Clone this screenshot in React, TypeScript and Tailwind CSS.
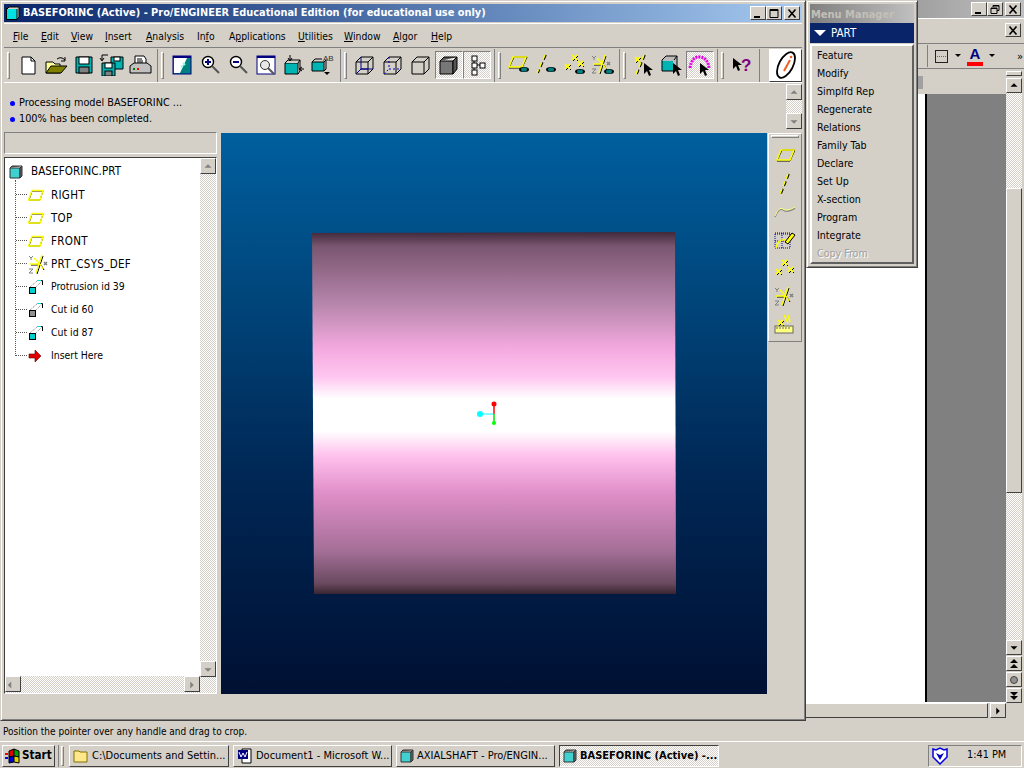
import React from "react";

// bevels used all over the place
const raised = "border border-t-white border-l-white border-r-[#404040] border-b-[#404040] bg-[#d4d0c8]";
const thin = "border border-t-white border-l-white border-r-[#808080] border-b-[#808080]";
const sunken = "border border-t-[#808080] border-l-[#808080] border-r-white border-b-white";
const dither = "bg-[repeating-conic-gradient(#ffffff_0%_25%,#d4d0c8_0%_50%)] bg-[length:2px_2px]";

function Svg({ w = 22, h = 22, children }: { w?: number; h?: number; children: React.ReactNode }) {
  return (
    <svg width={w} height={h} viewBox={`0 0 ${w} ${h}`} className="block shrink-0">
      {children}
    </svg>
  );
}

const Eye = ({ x = 0, y = 0 }: { x?: number; y?: number }) => (
  <g transform={`translate(${x} ${y})`}>
    <ellipse cx="5" cy="2.5" rx="5" ry="2.5" fill="#000" />
    <ellipse cx="5" cy="2.5" rx="3" ry="2" fill="#008080" />
  </g>
);
const Arrow = ({ x = 0, y = 0 }: { x?: number; y?: number }) => (
  <path transform={`translate(${x} ${y})`} d="M0 0V11L3 8L5 13L7 12L5 7H9Z" fill="#000" />
);
const Cross = ({ x, y }: { x: number; y: number }) => (
  <g transform={`translate(${x} ${y})`}>
    <path d="M1 1L6 6M6 1L1 6" stroke="#000" strokeWidth="1" />
    <path d="M0 0L5 5M5 0L0 5" stroke="#ffff00" strokeWidth="1.6" />
  </g>
);
const Plane = ({ dx = 0, dy = 0 }: { dx?: number; dy?: number }) => (
  <g transform={`translate(${dx} ${dy})`} fill="none">
    <path d="M1 13L6 2H19L14 13Z" stroke="#000" />
    <path d="M1 12L5 2H18L14 12Z" stroke="#ffff00" strokeWidth="1.5" />
  </g>
);
const Csys = ({ dx = 0, dy = 0 }: { dx?: number; dy?: number }) => (
  <g transform={`translate(${dx} ${dy})`}>
    <path d="M1 2L3 4L5 2M3 4V6M1 15H5L1 19H5" stroke="#808080" fill="none" />
    <path d="M16 8L19 11M19 8L16 11" stroke="#808080" strokeWidth="1.5" />
    <path d="M15 2L9 20M3 11H13M13 11L16 16" stroke="#000" strokeWidth="1" fill="none" />
    <path d="M14 1L8 19M2 10H12M12 10L15 15M12 10L6 4" stroke="#ffff00" strokeWidth="1.4" fill="none" />
  </g>
);

const icons: Record<string, React.ReactNode> = {
  new: <Svg><path d="M5 3H14L18 7V20H5Z" fill="#fff" stroke="#000" /><path d="M14 3V7H18" fill="none" stroke="#000" /></Svg>,
  open: (
    <Svg w={26}>
      <path d="M3 19V8H10L12 10H17V19Z" fill="#ffff99" stroke="#000" />
      <path d="M3 19L8 12H24L18 19Z" fill="#808000" stroke="#000" />
      <path d="M14 5Q18 2 22 6M22 3V7H18" fill="none" stroke="#000" />
    </Svg>
  ),
  save: (
    <Svg><path d="M3 3H19V19H3Z" fill="#00b4b4" stroke="#000" /><rect x="6" y="3" width="10" height="7" fill="#fff" stroke="#000" /><rect x="6" y="13" width="10" height="6" fill="#808080" stroke="#000" /></Svg>
  ),
  saveAll: (
    <Svg w={26}>
      <path d="M12 3H24V15H12Z" fill="#00b4b4" stroke="#000" /><rect x="15" y="3" width="6" height="4" fill="#fff" stroke="#000" />
      <path d="M3 9H16V22H3Z" fill="#00b4b4" stroke="#000" /><rect x="6" y="9" width="7" height="5" fill="#fff" stroke="#000" /><rect x="6" y="17" width="7" height="5" fill="#808080" stroke="#000" />
      <path d="M9 1H3M3 1V6M1 4L3 7L5 4" fill="none" stroke="#000" />
    </Svg>
  ),
  print: (
    <Svg w={24}>
      <path d="M7 2H16L18 5V11H7Z" fill="#fff" stroke="#000" /><path d="M9 5H14M9 7H15M9 9H15" stroke="#000" />
      <path d="M2 12L6 9H19L23 12V19H2Z" fill="#c0c0c0" stroke="#000" />
      <rect x="5" y="14" width="2" height="2" fill="#008000" /><rect x="9" y="14" width="2" height="2" fill="#ff0000" />
    </Svg>
  ),
  repaint: (
    <Svg w={20} h={20}>
      <rect x="1" y="1" width="18" height="18" fill="#008080" stroke="#000080" />
      <rect x="1" y="1" width="18" height="2" fill="#000080" />
      <path d="M2 3H15L8 18H2Z" fill="#fff" />
      <path d="M11 8L13 10M9 11L11 12" stroke="#8fd" strokeWidth="2" />
    </Svg>
  ),
  zoomIn: (
    <Svg><circle cx="9" cy="8" r="5.5" fill="#fff" stroke="#000" strokeWidth="1.4" /><path d="M6 8H12M9 5V11" stroke="#000080" strokeWidth="2" /><path d="M13 12L20 19" stroke="#555" strokeWidth="2" /></Svg>
  ),
  zoomOut: (
    <Svg><circle cx="9" cy="8" r="5.5" fill="#fff" stroke="#000" strokeWidth="1.4" /><path d="M6 8H12" stroke="#000080" strokeWidth="2" /><path d="M13 12L20 19" stroke="#555" strokeWidth="2" /></Svg>
  ),
  refit: (
    <Svg w={20} h={20}>
      <rect x="1" y="1" width="18" height="18" fill="#fff" stroke="#000080" /><rect x="1" y="1" width="18" height="2" fill="#000080" />
      <circle cx="9" cy="10" r="4.5" fill="#e8e8e8" stroke="#333" /><path d="M12 13L18 19" stroke="#555" strokeWidth="2" />
    </Svg>
  ),
  orient: (
    <Svg>
      <path d="M2 9H15V20H2Z" fill="#00b4b4" stroke="#000" /><path d="M2 9L5 6H17L15 9M17 6V17L15 20" fill="#d4d0c8" stroke="#000" />
      <path d="M7 1V6M5 4L7 7L9 4M21 15H17M19 13L16 15L19 17" fill="none" stroke="#000" />
    </Svg>
  ),
  views: (
    <Svg w={24}>
      <path d="M2 8H14V17H2Z" fill="#00b4b4" stroke="#000" /><path d="M2 8L5 5H12M14 8L16 6V15L14 17" fill="none" stroke="#000" />
      <path d="M11 17H17L14 20Z" fill="#000" transform="translate(3 1)" />
      <text x="13" y="7" fontSize="8" fill="#333" fontFamily="Liberation Sans, sans-serif">AB</text>
    </Svg>
  ),
  boxFull: <Svg><path d="M2 8H14V20H2Z M2 8L7 3H19V15L14 20M14 8L19 3" fill="none" stroke="#000" /><path d="M7 3V15H19M2 20L7 15" stroke="#000080" fill="none" /><path d="M7 15H14" stroke="#000080" /></Svg>,
  boxDash: <Svg><path d="M2 8H14V20H2Z M2 8L7 3H19V15L14 20M14 8L19 3" fill="none" stroke="#000" /><path d="M7 3V15H19M2 20L7 15" stroke="#0000c0" strokeDasharray="2 2" fill="none" /></Svg>,
  boxPlain: <Svg><path d="M2 8H14V20H2Z M2 8L7 3H19V15L14 20M14 8L19 3" fill="none" stroke="#000" /></Svg>,
  boxShade: (
    <Svg><path d="M2 7H15V20H2Z" fill="#777" stroke="#000" /><path d="M2 7L6 3H19V15L15 20V7L19 3" fill="#555" stroke="#000" /></Svg>
  ),
  tree: (
    <Svg w={20} h={22}>
      <rect x="5" y="2" width="5" height="5" fill="#fff" stroke="#000" /><rect x="5" y="9" width="5" height="5" fill="#fff" stroke="#000" /><rect x="5" y="16" width="5" height="5" fill="#fff" stroke="#000" /><rect x="13" y="9" width="5" height="5" fill="#fff" stroke="#000" />
      <path d="M7 7V9M7 14V16M10 11H13" stroke="#000" />
    </Svg>
  ),
  planeEye: <Svg w={24}><Plane dx={1} dy={1} /><Eye x={12} y={13} /></Svg>,
  axisEye: <Svg w={24}><path d="M11 1L3 19" stroke="#000" strokeWidth="1.6" strokeDasharray="5 3" /><path d="M10 1L2 19" stroke="#ffff00" strokeWidth="1.4" strokeDasharray="5 3" /><Eye x={11} y={13} /></Svg>,
  pointEye: <Svg w={24}><Cross x={9} y={1} /><Cross x={2} y={10} /><Cross x={15} y={7} /><Eye x={12} y={15} /></Svg>,
  csysEye: <Svg w={24}><Csys /><Eye x={13} y={15} /></Svg>,
  selAxis: <Svg w={24}><Cross x={3} y={3} /><path d="M13 1L5 20" stroke="#000" strokeWidth="1.6" strokeDasharray="5 3" /><path d="M12 1L4 20" stroke="#ffff00" strokeWidth="1.4" strokeDasharray="5 3" /><Arrow x={12} y={9} /></Svg>,
  selSolid: <Svg w={24}><path d="M2 6H14V17H2Z" fill="#00b4b4" stroke="#000" /><path d="M2 6L6 2H17V13L14 17M14 6L17 2" fill="#bbb" stroke="#000" /><rect x="3" y="7" width="10" height="9" fill="#00b4b4" /><Arrow x={13} y={9} /></Svg>,
  selSurf: <Svg w={24}><path d="M2 14Q4 2 12 3Q20 4 21 14" fill="none" stroke="#e000e0" strokeWidth="3" strokeDasharray="2 1" /><Arrow x={12} y={9} /></Svg>,
  help: (
    <Svg w={24}>
      <Arrow x={3} y={4} />
      <text x="11" y="17" fontSize="17" fontWeight="700" fill="#800080" fontFamily="Liberation Sans, sans-serif">?</text>
    </Svg>
  ),
};

function ToolBtn({ icon, on }: { icon: string; on?: boolean }) {
  return (
    <div className={`flex h-[28px] w-[28px] items-center justify-center ${on ? `${sunken} ${dither}` : ""}`}>
      {icons[icon]}
    </div>
  );
}

function Group({ items, on = [], w }: { items: string[]; on?: string[]; w: string }) {
  return (
    <div className={`flex h-[33px] items-center border-r border-r-[#808080] pl-[3px] ${w}`}>
      <div className={`mr-[4px] h-[27px] w-[3px] ${thin}`} />
      {items.map((i) => (
        <ToolBtn key={i} icon={i} on={on.includes(i)} />
      ))}
    </div>
  );
}

function WinBtn({ kind }: { kind: "min" | "max" | "close" | "restore" }) {
  return (
    <div className={`flex h-[14px] w-[16px] items-center justify-center ${raised}`}>
      <svg width="10" height="9" viewBox="0 0 10 9">
        {kind === "min" && <rect x="1" y="7" width="6" height="2" fill="#000" />}
        {kind === "max" && <path d="M1 0.5H9V8.5H1ZM1 1.5H9" fill="none" stroke="#000" />}
        {kind === "close" && <path d="M1.5 0.5L8.5 8.5M8.5 0.5L1.5 8.5" stroke="#000" strokeWidth="1.6" />}
        {kind === "restore" && <path d="M3 2V0.5H9V5.5H7M1 3H7V8.5H1ZM1 3.5H7M3 1H9" fill="none" stroke="#000" />}
      </svg>
    </div>
  );
}

function ScrollBtn({ dir, color = "#808080", className = "" }: { dir: "up" | "down" | "left" | "right"; color?: string; className?: string }) {
  const d = { up: "M4 6L8 2L12 6Z", down: "M4 3H12L8 7Z", left: "M6 1V9L2 5Z", right: "M6 1V9L10 5Z" }[dir];
  return (
    <div className={`flex h-[16px] w-[16px] shrink-0 items-center justify-center ${raised} ${className}`}>
      <svg width="16" height="9" viewBox="0 0 16 9" className="block">
        <path d={d} fill={color} />
      </svg>
    </div>
  );
}

function BrowseBtn({ kind }: { kind: "prev" | "dot" | "next" }) {
  return (
    <div className={`flex h-[15px] w-[16px] items-center justify-center ${raised}`}>
      <svg width="10" height="10" viewBox="0 0 10 10" className="block">
        {kind === "prev" && <path d="M5 0L9 4H1ZM5 5L9 9H1Z" fill="#000" />}
        {kind === "dot" && <circle cx="5" cy="5" r="3.5" fill="#909090" stroke="#444" />}
        {kind === "next" && <path d="M1 1H9L5 5ZM1 5H9L5 9Z" fill="#000" />}
      </svg>
    </div>
  );
}

const Under = ({ t, u }: { t: string; u: number }) => (
  <span>
    {t.slice(0, u)}
    <span className="underline">{t[u]}</span>
    {t.slice(u + 1)}
  </span>
);

const menus: [string, number, string][] = [
  ["File", 0, "w-[28px]"],
  ["Edit", 0, "w-[30px]"],
  ["View", 0, "w-[34px]"],
  ["Insert", 0, "w-[41px]"],
  ["Analysis", 0, "w-[51px]"],
  ["Info", 2, "w-[32px]"],
  ["Applications", 1, "w-[69px]"],
  ["Utilities", 0, "w-[46px]"],
  ["Window", 0, "w-[49px]"],
  ["Algor", 0, "w-[38px]"],
  ["Help", 0, "w-[30px]"],
];

const Extrude = ({ fill }: { fill: string }) => (
  <Svg w={16} h={16}>
    <path d="M7 9L14 2M2 8L9 2" stroke="#808080" strokeDasharray="1 1" />
    <path d="M10 1.5H14.5V6" stroke="#000" fill="none" />
    <path d="M9 1.5H13" stroke="#00e0e0" />
    <rect x="1.5" y="8.5" width="6" height="6" fill={fill} stroke="#000" />
  </Svg>
);

const treeIcons: Record<string, React.ReactNode> = {
  plane: <Svg w={16} h={14}><path d="M1 12L4 3H15L12 12Z" fill="none" stroke="#000" /><path d="M0.5 12L4 2.5H15L12 12Z" fill="none" stroke="#ffff00" strokeWidth="1.4" /></Svg>,
  csys: <Svg w={20} h={20}><Csys /></Svg>,
  cut: <Extrude fill="#00d0d0" />,
  cutGray: <Extrude fill="#909090" />,
  insert: <Svg w={16} h={14}><path d="M1 5H7V1L13 7L7 13V9H1Z" fill="#e00000" stroke="#600000" strokeWidth="0.6" /></Svg>,
};

const treeRows: [string, string][] = [
  ["RIGHT", "plane"],
  ["TOP", "plane"],
  ["FRONT", "plane"],
  ["PRT_CSYS_DEF", "csys"],
  ["Protrusion id 39", "cut"],
  ["Cut id 60", "cutGray"],
  ["Cut id 87", "cut"],
  ["Insert Here", "insert"],
];

function ModelTree() {
  return (
    <div className="flex h-[537px] border border-t-[#404040] border-l-[#404040] border-r-white border-b-white bg-white">
      <div className="flex min-w-0 flex-1 flex-col">
        <div className="relative flex-1 overflow-hidden bg-white">
          <div className="flex h-[25px] items-center pl-[4px] pt-[2px]">
            <svg width="14" height="14" viewBox="0 0 14 14" className="mr-[8px] block">
              <path d="M1 3H11V13H1Z" fill="#40d0d0" stroke="#333" />
              <path d="M1 3L3 1H13V11L11 13V3L13 1" fill="#606060" stroke="#333" />
            </svg>
            <span className="pt-[1px] text-[11.5px] tracking-[0.1px]">BASEFORINC.PRT</span>
          </div>
          <div className="absolute left-[10px] top-[22px] h-[176px] border-l border-dotted border-l-[#555]" />
          {treeRows.map(([t, ic]) => (
            <div key={t} className="flex h-[23px] items-center pl-[11px]">
              <div className="w-[11px] shrink-0 border-t border-dotted border-t-[#555]" />
              <div className="flex w-[24px] shrink-0 items-center pl-[1px]">{treeIcons[ic]}</div>
              <span className={t === t.toUpperCase() ? "pt-[2px] text-[11.5px] tracking-[0.3px]" : "text-[10.4px]"}>{t}</span>
            </div>
          ))}
        </div>
        <div className={`flex h-[17px] ${dither}`}>
          <ScrollBtn dir="left" />
          <div className="flex-1" />
          <ScrollBtn dir="right" />
        </div>
      </div>
      <div className={`flex w-[16px] flex-col justify-between pb-[16px] ${dither}`}>
        <ScrollBtn dir="up" />
        <ScrollBtn dir="down" />
      </div>
    </div>
  );
}

function Viewport() {
  return (
    <svg width="546" height="561" viewBox="0 0 546 561" className="block shrink-0">
      <defs>
        <linearGradient id="bg" x1="0" y1="0" x2="0" y2="1">
          <stop offset="0" stopColor="#005f9e" />
          <stop offset="0.3" stopColor="#00457a" />
          <stop offset="0.6" stopColor="#002856" />
          <stop offset="1" stopColor="#001033" />
        </linearGradient>
        <linearGradient id="shaft" x1="0" y1="0" x2="0" y2="1">
          <stop offset="0" stopColor="#40293a" />
          <stop offset="0.04" stopColor="#7a5670" />
          <stop offset="0.2" stopColor="#b786ac" />
          <stop offset="0.32" stopColor="#f3a9de" />
          <stop offset="0.4" stopColor="#ffc6f0" />
          <stop offset="0.46" stopColor="#ffffff" />
          <stop offset="0.55" stopColor="#ffffff" />
          <stop offset="0.62" stopColor="#ffc0ec" />
          <stop offset="0.72" stopColor="#e08fc8" />
          <stop offset="0.88" stopColor="#a56f98" />
          <stop offset="0.97" stopColor="#6a4a60" />
          <stop offset="1" stopColor="#3a2530" />
        </linearGradient>
      </defs>
      <rect width="546" height="561" fill="url(#bg)" />
      <path d="M91 100L454 99L455 461L93 461Z" fill="url(#shaft)" />
      <path d="M273 271V281" stroke="#ff0000" strokeWidth="1.5" />
      <path d="M259 281H273" stroke="#00ffff" strokeWidth="1" />
      <path d="M273 281V290" stroke="#00e000" strokeWidth="1.5" />
      <circle cx="273" cy="271" r="2.5" fill="#ff0000" />
      <circle cx="259" cy="281" r="3" fill="#00ffff" />
      <circle cx="273" cy="290" r="2" fill="#00ff00" />
    </svg>
  );
}

const paletteIcons: React.ReactNode[] = [
  <Svg w={20} h={16}><Plane dx={1} dy={0} /></Svg>,
  <Svg w={16} h={22}><path d="M12 1L4 21" stroke="#000" strokeWidth="1.6" strokeDasharray="5 3" /><path d="M11 1L3 21" stroke="#ffff00" strokeWidth="1.4" strokeDasharray="5 3" /></Svg>,
  <Svg w={22} h={14}><path d="M1 12Q5 2 9 5T21 3" fill="none" stroke="#888" strokeWidth="1.5" /><path d="M1 11Q5 1 9 4T21 2" fill="none" stroke="#ffff80" /></Svg>,
  <Svg w={22} h={20}>
    <rect x="1" y="3" width="15" height="15" fill="none" stroke="#0000a0" strokeDasharray="1 1" />
    <path d="M1 4H16M1 11H16M8 3V18" stroke="#0000a0" strokeDasharray="1 1" />
    <path d="M2 18Q4 8 12 10" fill="none" stroke="#ffff00" strokeWidth="1.5" />
    <path d="M11 12L18 3L21 5L14 14Z" fill="#ffff00" stroke="#000" />
  </Svg>,
  <Svg w={20} h={18}><Cross x={7} y={1} /><Cross x={1} y={10} /><Cross x={13} y={8} /></Svg>,
  <Svg w={22} h={20}><Csys /></Svg>,
  <Svg w={22} h={20}>
    <Cross x={4} y={6} />
    <path d="M10 1L14 9M14 1L16 8" stroke="#ffff00" strokeWidth="1.5" />
    <rect x="1" y="12" width="18" height="7" fill="#ffff80" stroke="#666" />
    <path d="M3 13V15M6 13V15M9 13V15M12 13V15M15 13V15" stroke="#666" />
  </Svg>,
];

function MainWindow() {
  return (
    <div className="absolute left-0 top-0 flex h-[721px] w-[806px] flex-col border border-t-[#d4d0c8] border-l-[#d4d0c8] border-r-[#404040] border-b-[#404040] bg-[#d4d0c8] p-[3px] shadow-[inset_1px_1px_0_#ffffff,inset_-1px_-1px_0_#808080]">
      {/* title bar */}
      <div className="flex h-[18px] items-center bg-gradient-to-r from-[#0a246a] to-[#a6caf0] pl-[2px] pr-[2px] text-white">
        <svg width="14" height="14" viewBox="0 0 14 14" className="mr-[3px] block shrink-0">
          <path d="M0.5 2.5H11.5V13.5H0.5Z" fill="#00e0e0" stroke="#000" />
          <path d="M1 3L3 1H13V11L11 13V3" fill="#d4d0c8" stroke="#000" />
        </svg>
        <span className="flex-1 text-[10.9px] font-bold">BASEFORINC (Active) - Pro/ENGINEER Educational Edition (for educational use only)</span>
        <WinBtn kind="min" />
        <WinBtn kind="max" />
        <div className="ml-[2px]">
          <WinBtn kind="close" />
        </div>
      </div>
      {/* menu */}
      <div className="mt-[1px] flex h-[24px] items-center border-t border-t-white pl-[9px] pt-[2px] text-[10.3px]">
        {menus.map(([t, u, w]) => (
          <div key={t} className={w}>
            <Under t={t} u={u} />
          </div>
        ))}
      </div>
      {/* toolbar */}
      <div className="flex h-[36px] items-center border-y border-t-[#808080] border-b-white">
        <Group w="w-[154px]" items={["new", "open", "save", "saveAll", "print"]} />
        <Group w="w-[183px]" items={["repaint", "zoomIn", "zoomOut", "refit", "orient", "views"]} />
        <Group w="w-[155px]" items={["boxFull", "boxDash", "boxPlain", "boxShade", "tree"]} on={["boxShade", "tree"]} />
        <Group w="w-[125px]" items={["planeEye", "axisEye", "pointEye", "csysEye"]} />
        <Group w="w-[98px]" items={["selAxis", "selSolid", "selSurf"]} on={["selSurf"]} />
        <Group w="w-[42px]" items={["help"]} />
        <div className={`ml-[9px] flex h-[33px] w-[33px] items-center justify-center ${raised} !bg-white`}>
          <svg width="28" height="28" viewBox="0 0 28 28">
            <ellipse cx="14" cy="14" rx="7" ry="14" transform="rotate(28 14 14)" fill="none" stroke="#000" strokeWidth="1.8" />
            <path d="M18 9L12 20" stroke="#f06020" strokeWidth="2" />
            <circle cx="19" cy="6" r="1.3" fill="#f06020" />
          </svg>
        </div>
      </div>
      {/* message area */}
      <div className="flex h-[49px] shrink-0">
        <div className="flex flex-1 flex-col justify-end gap-[2px] pb-[6px] pl-[6px] text-[10.8px]">
          {["Processing model BASEFORINC ...", "100% has been completed."].map((m) => (
            <div key={m} className="flex h-[14px] items-center">
              <span className="mr-[4px] h-[5px] w-[5px] rounded-full bg-[#0000ff]" />
              {m}
            </div>
          ))}
        </div>
        <div className={`mt-[1px] flex h-[45px] w-[16px] flex-col ${dither}`}>
          <ScrollBtn dir="up" />
          <div className="flex-1" />
          <ScrollBtn dir="down" />
        </div>
      </div>
      {/* work area */}
      <div className="flex min-h-0 flex-1">
        <div className="w-[213px] shrink-0">
          <div className="h-[22px] border border-t-[#808080] border-l-[#808080] border-r-white border-b-white" />
          <div className="mt-[3px]"><ModelTree /></div>
        </div>
        <div className="ml-[4px] mt-[1px]"><Viewport /></div>
        <div className={`ml-[1px] mt-[1px] flex h-[209px] w-[34px] flex-col items-center ${thin} pt-[1px]`}>
          <div className={`h-[3px] w-[28px] ${thin}`} />
          <div className="mt-[4px] flex flex-col items-center">
            {paletteIcons.map((ic, i) => (
              <div key={i} className="flex h-[28px] items-center justify-center">{ic}</div>
            ))}
          </div>
        </div>
      </div>
    </div>
  );
}

function WordWindow() {
  return (
    <div className="absolute left-[805px] top-0 flex h-[720px] w-[219px] flex-col bg-[#d4d0c8]">
      <div className="flex h-[18px] justify-end bg-gradient-to-r from-[#808080] to-[#c0c0c0] pr-[3px] pt-[2px]">
        <WinBtn kind="min" />
        <WinBtn kind="restore" />
        <div className="ml-[2px]"><WinBtn kind="close" /></div>
      </div>
      <div className="flex h-[25px] justify-end border-t border-t-white pr-[3px] pt-[4px]">
        <WinBtn kind="close" />
      </div>
      <div className="flex h-[26px] items-center border-y border-t-[#808080] border-b-[#808080] pl-[122px]">
        <div className="h-[22px] w-[1px] bg-[#808080]" />
        <div className="ml-[7px] flex h-[13px] w-[13px] items-center justify-center border border-[#222]">
          <div className="h-[1px] w-[9px] border-t border-dotted border-[#666]" />
        </div>
        <svg width="6" height="4" viewBox="0 0 6 4" className="ml-[7px]"><path d="M0 0H6L3 3Z" fill="#000" /></svg>
        <div className="ml-[6px] flex w-[16px] flex-col items-center">
          <span className="h-[14px] font-['Liberation_Sans',sans-serif] text-[15px] font-bold leading-[14px] text-[#000080]">A</span>
          <div className="mt-[1px] h-[4px] w-[16px] bg-[#ff0000]" />
        </div>
        <svg width="6" height="4" viewBox="0 0 6 4" className="ml-[6px]"><path d="M0 0H6L3 3Z" fill="#000" /></svg>
        <span className="ml-[22px] text-[11px] leading-none">»</span>
      </div>
      <div className="flex min-h-0 flex-1 pb-[2px]">
        <div className="flex flex-1 flex-col">
          <div className="flex h-[25px] items-center pl-[112px] pt-[2px]">
            <div className="h-[13px] w-[6px] bg-[#a0a0a0]" />
          </div>
          <div className="flex flex-1">
            <div className="w-[120px] bg-white" />
            <div className="w-[2px] bg-black" />
            <div className="flex-1 bg-[#808080]" />
          </div>
          <div className="flex h-[16px] items-center border-t border-t-white">
            <div className={`h-[15px] flex-1 ${raised}`} />
            <ScrollBtn dir="right" color="#000" className="ml-[2px] !h-[15px]" />
          </div>
        </div>
        <div className="flex w-[16px] flex-col pt-[2px]">
          <div className={`h-[5px] ${raised}`} />
          <ScrollBtn dir="up" color="#000" className="mt-[2px] !h-[15px]" />
          <div className={`flex h-[547px] flex-col ${dither}`}>
            <div className="h-[95px]" />
            <div className={`h-[305px] ${raised}`} />
          </div>
          <div className="flex flex-col gap-[1px]">
            <ScrollBtn dir="down" color="#000" className="!h-[15px]" />
            <BrowseBtn kind="prev" />
            <BrowseBtn kind="dot" />
            <BrowseBtn kind="next" />
          </div>
        </div>
        <div className="w-[2px]" />
      </div>
    </div>
  );
}

const menuItems = ["Feature", "Modify", "Simplfd Rep", "Regenerate", "Relations", "Family Tab", "Declare", "Set Up", "X-section", "Program", "Integrate"];

function MenuManager() {
  return (
    <div className="absolute left-[806px] top-0 flex h-[268px] w-[112px] flex-col border border-r-[#404040] border-b-[#404040] border-t-[#d4d0c8] border-l-[#d4d0c8] bg-[#d4d0c8] p-[3px] text-[10.6px] shadow-[inset_1px_1px_0_#ffffff,inset_-1px_-1px_0_#808080]">
      <div className="flex h-[19px] shrink-0 items-center bg-gradient-to-r from-[#808080] to-[#c0c0c0] pl-[1px] pt-[2px] text-[11px] font-bold text-[#c4c0b8]">Menu Manager</div>
      <div className="flex h-[20px] shrink-0 items-center bg-[#0a246a] pl-[4px] text-white">
        <svg width="12" height="6" viewBox="0 0 12 6" className="mr-[5px] block"><path d="M0 0H12L6 6Z" fill="#fff" /></svg>
        <span className="pt-[1px] text-[11.5px]">PART</span>
      </div>
      <div className="mt-[1px] flex flex-1 flex-col border-2 border-t-white border-l-white border-r-[#606060] border-b-[#606060] pl-[5px]">
        {menuItems.map((m) => (
          <div key={m} className="flex h-[18px] items-center">{m}</div>
        ))}
        <div className="flex h-[18px] items-center text-[#a0a0a0] [text-shadow:1px_1px_0_#ffffff]">Copy From</div>
      </div>
    </div>
  );
}

function TaskBtn({ w, label, icon, active }: { w: string; label: string; icon: React.ReactNode; active?: boolean }) {
  return (
    <div className={`flex h-[22px] items-center gap-[3px] pl-[3px] text-[11px] ${w} ${active ? `border border-t-[#404040] border-l-[#404040] border-r-white border-b-white font-bold ${dither}` : raised}`}>
      {icon}
      <span className="whitespace-nowrap">{label}</span>
    </div>
  );
}

function Taskbar() {
  const solid = (
    <svg width="14" height="14" viewBox="0 0 14 14" className="block shrink-0">
      <path d="M1 3H11V13H1Z" fill="#40d0d0" stroke="#333" />
      <path d="M1 3L3 1H13V11L11 13V3L13 1" fill="#707070" stroke="#333" />
    </svg>
  );
  return (
    <div className="flex h-[27px] items-center border-t border-t-white bg-[#d4d0c8] pl-[2px] pr-[2px] pt-[1px]">
      <div className={`flex h-[22px] w-[53px] items-center pl-[2px] text-[11.6px] font-bold ${raised}`}>
        <svg width="16" height="16" viewBox="0 0 16 16" className="mr-[1px] block">
          <rect x="0" y="5" width="3" height="2" fill="#f00" /><rect x="0" y="9" width="3" height="2" fill="#00f" />
          <path d="M4 3L9 1V8L4 9Z" fill="#e00000" stroke="#000" />
          <path d="M9 1L14 3V9L9 8Z" fill="#00a000" stroke="#000" />
          <path d="M4 9L9 8V14L4 15Z" fill="#0000d0" stroke="#000" />
          <path d="M9 8L14 9V15L9 14Z" fill="#e0d000" stroke="#000" />
        </svg>
        Start
      </div>
      <div className="ml-[3px] h-[22px] w-[1px] bg-[#808080]" />
      <div className={`ml-[2px] h-[20px] w-[3px] ${thin}`} />
      <div className="ml-[5px] flex gap-[4px]">
        <TaskBtn w="w-[160px]" label="C:\Documents and Settin..." icon={
          <svg width="16" height="14" viewBox="0 0 16 14" className="block shrink-0"><path d="M1 13V2H6L7 3H14V13Z" fill="#ffe88a" stroke="#807000" /></svg>
        } />
        <TaskBtn w="w-[159px]" label="Document1 - Microsoft W..." icon={
          <svg width="16" height="16" viewBox="0 0 16 16" className="block shrink-0">
            <path d="M5 1H14V15H5Z" fill="#fff" stroke="#000" /><rect x="1" y="2" width="10" height="9" fill="#000080" />
            <path d="M2 4L4 9L6 5L8 9L10 4" fill="none" stroke="#fff" />
          </svg>
        } />
        <TaskBtn w="w-[159px]" label="AXIALSHAFT - Pro/ENGIN..." icon={solid} />
        <TaskBtn w="w-[160px]" label="BASEFORINC (Active) -..." icon={solid} active />
      </div>
      <div className="flex-1" />
      <div className={`flex h-[22px] w-[94px] items-center pl-[3px] ${sunken}`}>
        <svg width="16" height="18" viewBox="0 0 16 18" className="block">
          <path d="M1 2L4 3L8 1L12 3L15 2V10L8 17L1 10Z" fill="#fff" stroke="#0000e0" strokeWidth="1.5" />
          <path d="M4 6L8 13L12 6L8 8Z" fill="#0000c0" />
        </svg>
        <span className="ml-[19px] text-[10.8px]">1:41 PM</span>
      </div>
    </div>
  );
}

export default function App() {
  return (
    <div className="relative h-[768px] w-[1024px] overflow-hidden bg-[#d4d0c8] font-['DejaVu_Sans_Condensed','DejaVu_Sans','Liberation_Sans',sans-serif] text-[10px] leading-none text-black">
      <WordWindow />
      <MainWindow />
      <MenuManager />
      <div className="absolute inset-x-0 bottom-0">
        <div className="flex h-[20px] items-center pl-[3px] pt-[1px]">Position the pointer over any handle and drag to crop.</div>
        <Taskbar />
      </div>
    </div>
  );
}
